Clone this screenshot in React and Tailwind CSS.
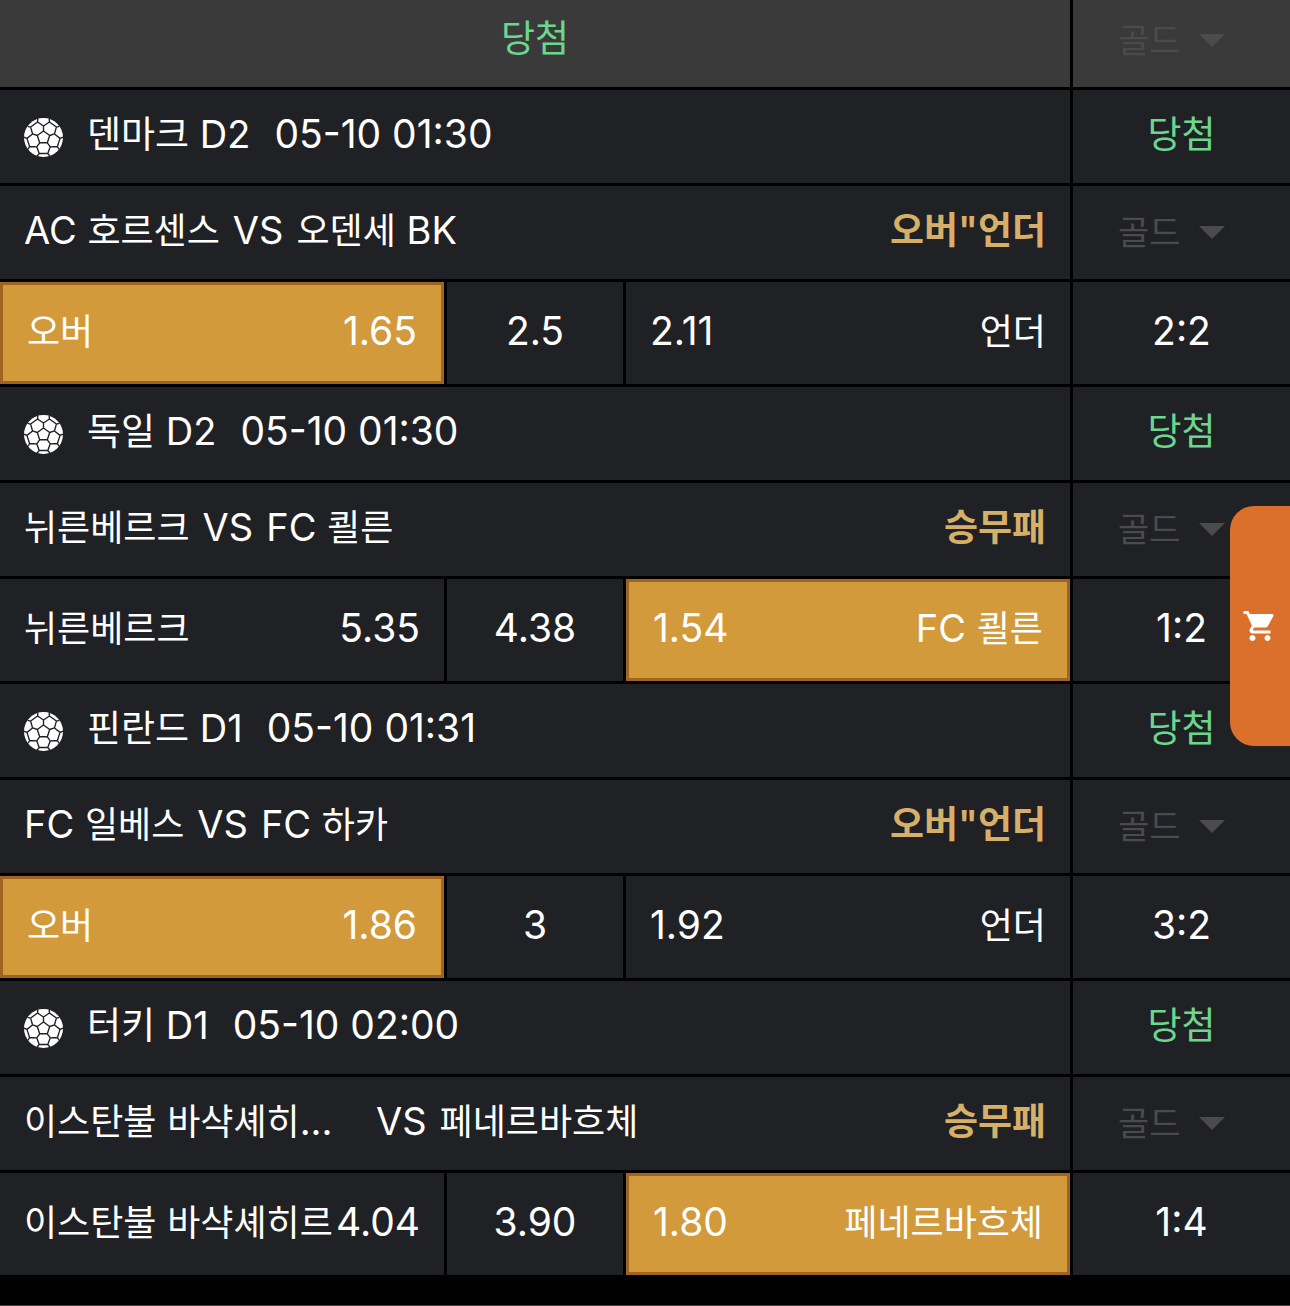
import { MdShoppingCart } from 'react-icons/md';

const matches = [
  {
    league: '덴마크 D2',
    time: '05-10 01:30',
    home: 'AC 호르센스',
    away: '오덴세 BK',
    market: '오버"언더',
    score: '2:2',
    odds: { left: ['오버', '1.65'], mid: '2.5', right: ['2.11', '언더'] },
    picked: 'left',
  },
  {
    league: '독일 D2',
    time: '05-10 01:30',
    home: '뉘른베르크',
    away: 'FC 쾰른',
    market: '승무패',
    score: '1:2',
    odds: { left: ['뉘른베르크', '5.35'], mid: '4.38', right: ['1.54', 'FC 쾰른'] },
    picked: 'right',
  },
  {
    league: '핀란드 D1',
    time: '05-10 01:31',
    home: 'FC 일베스',
    away: 'FC 하카',
    market: '오버"언더',
    score: '3:2',
    odds: { left: ['오버', '1.86'], mid: '3', right: ['1.92', '언더'] },
    picked: 'left',
  },
  {
    league: '터키 D1',
    time: '05-10 02:00',
    home: '이스탄불 바샥셰히...',
    homeWide: true,
    away: '페네르바흐체',
    market: '승무패',
    score: '1:4',
    odds: { left: ['이스탄불 바샥셰히르', '4.04'], mid: '3.90', right: ['1.80', '페네르바흐체'] },
    picked: 'right',
  },
];

// Hangul is set a little smaller than the latin letters, digits a little larger
function Txt({ children, big }) {
  return children.split(/([가-힣]+)/).map((part, i) =>
    i % 2 ? (
      <span
        key={i}
        className={`font-['Noto_Sans_CJK_KR',sans-serif] leading-none ${big ? 'text-[37px]' : 'text-[36px]'}`}
      >
        {part}
      </span>
    ) : (
      part
    )
  );
}

function Num({ children }) {
  return <span className="text-[39px]">{children}</span>;
}

const at = (deg, r) => {
  const a = ((deg - 90) * Math.PI) / 180;
  return `${(20 + r * Math.cos(a)).toFixed(2)} ${(20 + r * Math.sin(a)).toFixed(2)}`;
};

const seams = [0, 72, 144, 216, 288]
  .map(
    (d) =>
      `M${at(d, 6.7)}L${at(d + 72, 6.7)}M${at(d, 6.7)}L${at(d, 11.8)}` +
      `M${at(d - 17, 20)}L${at(d - 21, 17)}L${at(d, 11.8)}L${at(d + 21, 17)}L${at(d + 17, 20)}` +
      `M${at(d + 21, 17)}L${at(d + 51, 17)}`
  )
  .join('');

function Ball() {
  return (
    <svg viewBox="0 0 40 40" className="size-[39px] shrink-0" aria-hidden="true">
      <circle cx="20" cy="20" r="20" fill="#fff" />
      <path d={seams} fill="none" stroke="#202125" strokeWidth="1.4" strokeLinejoin="round" />
    </svg>
  );
}

function GoldSelect({ label }) {
  return (
    <div className="flex items-center justify-center gap-[18px] pr-5 pb-1 text-[#4b4b4c]">
      <select
        aria-label={label}
        disabled
        className="appearance-none bg-transparent font-['Noto_Sans_CJK_KR',sans-serif] text-[34px] leading-[50px]"
      >
        <option>골드</option>
      </select>
      <svg viewBox="0 0 26 13" className="mt-1 h-[13px] w-[26px]" fill="currentColor" aria-hidden="true">
        <path d="M0 0h26L13 13z" />
      </svg>
    </div>
  );
}

function Odd({ values, picked }) {
  return (
    <button
      type="button"
      aria-pressed={picked}
      className={`flex min-w-0 items-center justify-between px-6 pb-1 whitespace-nowrap ${
        picked ? 'border-3 border-[#9e6421] bg-[#d39a3b]' : 'bg-[#202125]'
      }`}
    >
      {values.map((value) =>
        /^\d/.test(value) ? (
          <Num key={value}>{value}</Num>
        ) : (
          <span key={value}><Txt>{value}</Txt></span>
        )
      )}
    </button>
  );
}

function Match({ match }) {
  const { odds, picked } = match;
  return (
    <>
      <div className="flex h-[93px] items-center bg-[#202125] px-6 pt-0.5">
        <Ball />
        <div className="flex items-baseline gap-6 pb-2 pl-6">
          <span><Txt big>{match.league}</Txt></span>
          <time className="text-[39px]">{match.time}</time>
        </div>
      </div>
      <div className="flex items-center justify-center bg-[#202125] pb-1.5 text-[#6cd68f]">
        <span><Txt big>당첨</Txt></span>
      </div>

      <div className="flex h-[93px] items-center justify-between bg-[#202125] px-6 pb-1.5">
        <div className="flex gap-[13px]">
          <span className={match.homeWide ? 'w-[339px]' : ''}><Txt>{match.home}</Txt></span>
          <span>VS</span>
          <span><Txt>{match.away}</Txt></span>
        </div>
        <span className="font-semibold text-[#d6af69]"><Txt big>{match.market}</Txt></span>
      </div>
      <div className="flex items-center justify-center bg-[#202125]">
        <GoldSelect label={match.league} />
      </div>

      <div className="grid h-[102px] grid-cols-[minmax(0,1fr)_176px_minmax(0,1fr)] gap-[3px]">
        <Odd values={odds.left} picked={picked === 'left'} />
        <button type="button" className="bg-[#202125] pb-1"><Num>{odds.mid}</Num></button>
        <Odd values={odds.right} picked={picked === 'right'} />
      </div>
      <div className="flex items-center justify-center bg-[#202125] pb-1"><Num>{match.score}</Num></div>
    </>
  );
}

export default function App() {
  return (
    <div className="relative border-b border-[#4a4446] bg-black pb-[30px] font-['Inter','Noto_Sans_CJK_KR',sans-serif] text-[38px] leading-[50px] text-white">
      <main className="grid grid-cols-[minmax(0,1fr)_217px] gap-[3px]">
        <div className="flex h-[87px] items-center justify-center bg-[#3a3a3b] pb-3 text-[#6cd68f]">
          <span><Txt big>당첨</Txt></span>
        </div>
        <div className="flex items-center justify-center bg-[#3a3a3b] pb-1.5">
          <GoldSelect label="골드" />
        </div>
        {matches.map((match) => (
          <Match key={match.league} match={match} />
        ))}
      </main>

      <button
        type="button"
        aria-label="Cart"
        className="absolute top-[506px] right-0 flex h-60 w-[60px] items-center justify-center rounded-l-3xl bg-[#db6f2c]"
      >
        <MdShoppingCart className="size-9" />
      </button>
    </div>
  );
}
